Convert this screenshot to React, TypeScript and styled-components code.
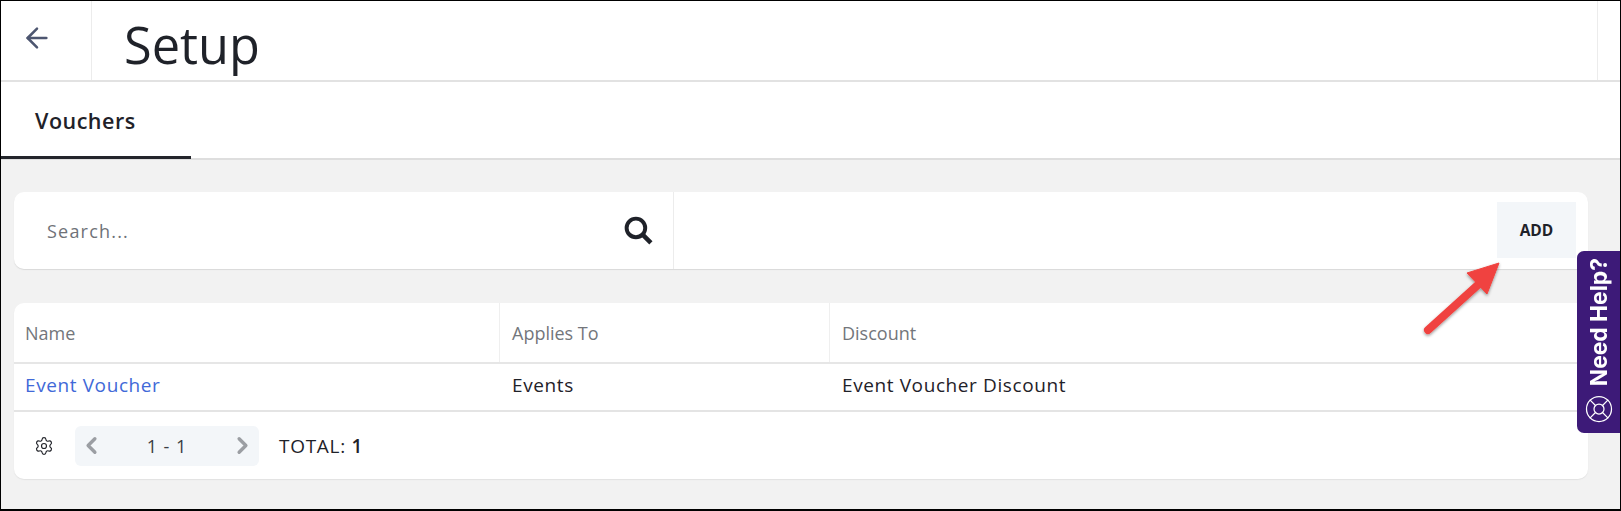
import React from "react";
import styled, { createGlobalStyle } from "styled-components";
import { ArrowLeft, ChevronLeft, ChevronRight, LifeBuoy, Settings } from "lucide-react";

const GlobalStyle = createGlobalStyle`
  html, body {
    margin: 0;
    padding: 0;
    background: #fff;
  }
  * {
    box-sizing: border-box;
  }
`;

const columns = "486px 330px 1fr";

const App: React.FC = () => {
  return (
    <>
      <GlobalStyle />
      <Frame>
        <Header>
          <BackCell>
            <ArrowLeft size={32} strokeWidth={1.9} color="#4d5670" />
          </BackCell>
          <Title>Setup</Title>
          <HeaderEnd />
        </Header>
        <Tabs>
          <Tab>Vouchers</Tab>
        </Tabs>
        <Content>
          <SearchCard>
            <SearchBox>
              <SearchText>Search...</SearchText>
              <svg width="31" height="31" viewBox="0 0 30 30" fill="none" stroke="#1f2229">
                <circle cx="12.5" cy="12.5" r="9" strokeWidth="3.8" />
                <path d="M19.5 19.5 L27 27" strokeWidth="4.4" />
              </svg>
            </SearchBox>
            <Actions>
              <AddButton>ADD</AddButton>
            </Actions>
          </SearchCard>
          <TableCard>
            <HeadRow>
              <HeadCell>Name</HeadCell>
              <HeadCell>Applies To</HeadCell>
              <HeadCell>Discount</HeadCell>
            </HeadRow>
            <BodyRow>
              <BodyCell><VoucherLink>Event Voucher</VoucherLink></BodyCell>
              <BodyCell>Events</BodyCell>
              <BodyCell>Event Voucher Discount</BodyCell>
            </BodyRow>
            <Footer>
              <Settings size={20} strokeWidth={1.4} color="#23252b" />
              <Pager>
                <ChevronLeft size={27} strokeWidth={3} color="#9b9ea3" />
                <PageText>1 - 1</PageText>
                <ChevronRight size={27} strokeWidth={3} color="#9b9ea3" />
              </Pager>
              <Total>TOTAL: <b>1</b></Total>
            </Footer>
          </TableCard>
        </Content>
        <HelpTab>
          <LifeBuoy size={30} strokeWidth={1} color="#fff" />
          <HelpText>Need Help?</HelpText>
        </HelpTab>
        <Arrow width="95" height="90" viewBox="0 0 95 90">
          <defs>
            <filter id="arrowShadow" x="-20%" y="-20%" width="150%" height="150%">
              <feDropShadow dx="0" dy="1.5" stdDeviation="1.5" floodColor="#000" floodOpacity="0.4" />
            </filter>
          </defs>
          <g filter="url(#arrowShadow)">
            <path d="M14 75 L66 28" stroke="#f0433f" strokeWidth="8" strokeLinecap="round" />
            <path d="M53 18 L85 8 L73 39 Z" fill="#f0433f" stroke="#f0433f" strokeWidth="1" />
          </g>
        </Arrow>
      </Frame>
    </>
  );
};

const Frame = styled.div`
  position: relative;
  width: 1621px;
  height: 511px;
  display: flex;
  flex-direction: column;
  overflow: hidden;
  background: #fff;
  border: 1px solid #000;
  border-bottom-width: 2px;
  font-family: "Open Sans", "Liberation Sans", sans-serif;
  color: #1f2229;
`;

const Header = styled.div`
  height: 81px;
  flex: none;
  display: flex;
  border-bottom: 2px solid #e2e2e2;
`;

const BackCell = styled.div`
  width: 91px;
  display: flex;
  align-items: flex-start;
  padding: 21px 0 0 20px;
  border-right: 1px solid #ececec;
`;

const Title = styled.h1`
  flex: 1;
  margin: 0;
  padding-left: 32px;
  font-size: 50.5px;
  font-weight: 400;
  line-height: 87px;
  height: 79px;
  overflow: visible;
  color: #1f2229;
`;

const HeaderEnd = styled.div`
  width: 23px;
  border-left: 1px solid #ececec;
`;

const Tabs = styled.div`
  height: 78px;
  flex: none;
  display: flex;
  border-bottom: 2px solid #dedede;
`;

const Tab = styled.div`
  width: 190px;
  height: 77px;
  padding: 3px 0 0 34px;
  display: flex;
  align-items: center;
  font-size: 21.5px;
  font-weight: 600;
  letter-spacing: 0.5px;
  color: #1f2229;
  border-bottom: 3px solid #23252b;
`;

const Content = styled.div`
  flex: 1;
  background: #f2f2f2;
  padding: 32px 32px 0 13px;
  display: flex;
  flex-direction: column;
  gap: 34px;
`;

const SearchCard = styled.div`
  height: 77px;
  display: flex;
  background: #fff;
  border-radius: 10px;
  box-shadow: 0 1px 1px #d9d9d9;
`;

const SearchBox = styled.div`
  width: 660px;
  display: flex;
  align-items: center;
  justify-content: space-between;
  padding: 0 19px 0 33px;
  border-right: 1px solid #ececec;
`;

const SearchText = styled.span`
  font-size: 18px;
  letter-spacing: 1.2px;
  color: #6f7278;
`;

const Actions = styled.div`
  flex: 1;
  display: flex;
  justify-content: flex-end;
  align-items: flex-start;
  padding: 10px 12px 0 0;
`;

const AddButton = styled.button`
  width: 79px;
  height: 56px;
  border: none;
  background: #f3f6f9;
  font-family: inherit;
  font-size: 15.5px;
  font-weight: 700;
  color: #1f2229;
`;

const TableCard = styled.div`
  height: 176px;
  display: flex;
  flex-direction: column;
  background: #fff;
  border-radius: 10px;
  box-shadow: 0 1px 1px #e2e2e2;
`;

const HeadRow = styled.div`
  height: 61px;
  display: grid;
  grid-template-columns: ${columns};
  border-bottom: 2px solid #e6e6e6;
`;

const HeadCell = styled.div`
  display: flex;
  align-items: center;
  padding-left: 12px;
  font-size: 18px;
  color: #73767b;
  border-right: 1px solid #efefef;

  &:first-child {
    padding-left: 11px;
  }
  &:last-child {
    border-right: none;
  }
`;

const BodyRow = styled.div`
  height: 48px;
  display: grid;
  grid-template-columns: ${columns};
  border-bottom: 2px solid #e4e4e4;
`;

const BodyCell = styled.div`
  display: flex;
  align-items: center;
  padding: 0 0 4px 12px;
  font-size: 19px;
  letter-spacing: 0.6px;
  color: #1f2229;

  &:first-child {
    padding-left: 11px;
  }
`;

const VoucherLink = styled.a`
  color: #4169d8;
`;

const Footer = styled.div`
  flex: 1;
  display: flex;
  align-items: center;
  padding-left: 20px;
`;

const Pager = styled.div`
  width: 184px;
  height: 40px;
  margin-left: 21px;
  display: flex;
  align-items: center;
  justify-content: space-between;
  padding: 0 3px;
  background: #f3f6f9;
  border-radius: 6px;
`;

const PageText = styled.span`
  font-size: 18px;
  letter-spacing: 1px;
  color: #3a3d44;
`;

const Total = styled.span`
  margin-left: 20px;
  font-size: 19px;
  letter-spacing: 0.7px;
  color: #1f2229;

  b {
    font-weight: 600;
  }
`;

const HelpTab = styled.div`
  position: absolute;
  right: 0;
  top: 250px;
  width: 43px;
  height: 182px;
  display: flex;
  flex-direction: column;
  align-items: center;
  justify-content: flex-end;
  gap: 8px;
  padding-bottom: 9px;
  background: #3d1a78;
  border-radius: 7px 0 0 7px;
`;

const HelpText = styled.span`
  order: -1;
  writing-mode: vertical-rl;
  transform: rotate(180deg);
  font-family: "Inter", "Liberation Sans", sans-serif;
  font-size: 22.8px;
  font-weight: 700;
  color: #fff;
  white-space: nowrap;
`;

const Arrow = styled.svg`
  position: absolute;
  left: 1413px;
  top: 254px;
`;

export default App;
